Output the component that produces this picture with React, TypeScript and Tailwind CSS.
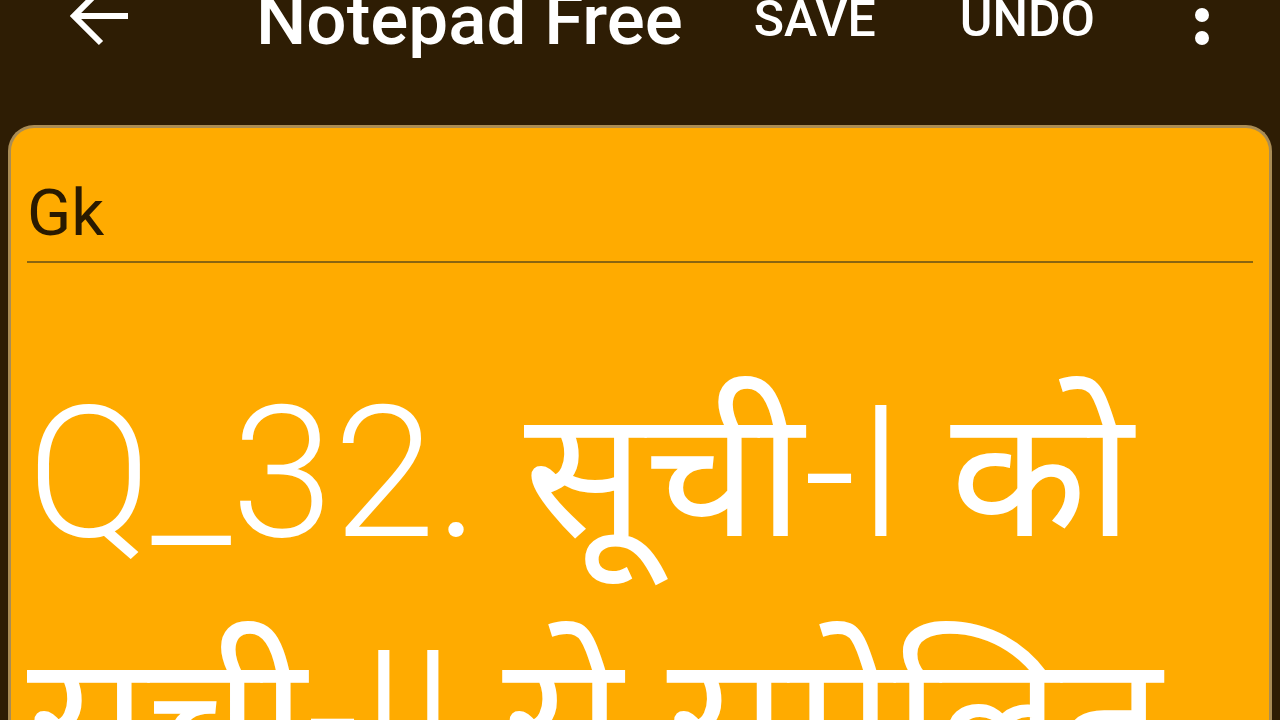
import React from 'react';

const ui = { fontFamily: 'Roboto, "Noto Sans", sans-serif' };
const note = { fontFamily: 'Roboto, "Noto Sans Devanagari", "Noto Sans", "DejaVu Sans", sans-serif' };

const BackArrow = () => (
  <svg width="60" height="60" viewBox="0 0 60 60" className="-mt-[14px] ml-[70px] shrink-0">
    <path d="M4 30 H58 M31 3 L4 30 L31 57" fill="none" stroke="#ffffff" strokeWidth="6" />
  </svg>
);

const MoreDots = () => (
  <svg width="14" height="60" viewBox="0 0 14 60" className="-mt-[15px] shrink-0">
    <circle cx="7" cy="7" r="7" fill="#ffffff" />
    <circle cx="7" cy="30" r="7" fill="#ffffff" />
    <circle cx="7" cy="53" r="7" fill="#ffffff" />
  </svg>
);

// Hindi words are a touch heavier and narrower than the Latin run in the note
const Hi = ({ children }: { children: React.ReactNode }) => (
  <span className="font-normal text-[178px]">{children}</span>
);

export default function App() {
  return (
    <div className="w-[1280px] h-[720px] overflow-hidden bg-[#2e1d04] flex flex-col">
      {/* Toolbar */}
      <div className="h-[125px] shrink-0 flex items-start text-white" style={ui}>
        <BackArrow />
        <span className="ml-[126px] -mt-[16px] text-[71px] font-medium leading-none">
          Notepad Free
        </span>
        <div className="ml-auto mr-[71px] flex items-start">
          <span className="-mt-[6px] text-[50px] font-medium leading-none">SAVE</span>
          <span className="ml-[84px] -mt-[6px] text-[50px] font-medium leading-none">UNDO</span>
          <span className="ml-[100px]">
            <MoreDots />
          </span>
        </div>
      </div>

      {/* Note card */}
      <div className="mx-[8px] flex-1 rounded-t-[26px] border-[3px] border-b-0 border-[#a98c55] bg-[#ffab00] px-[16px] pt-[53px] overflow-hidden">
        <div className="text-[65px] leading-none text-[#2a1a00]" style={ui}>
          Gk
        </div>
        <div className="mt-[15px] h-[2px] bg-[#8a6510]" />
        <p className="mt-[89px] text-[184px] font-light leading-[243px] text-white" style={note}>
          Q_32. <Hi>सूची</Hi>-I <Hi>को</Hi>
          <br />
          <Hi>सूची</Hi>-II <Hi>से सुमेलित कीजिए</Hi>
        </p>
      </div>
    </div>
  );
}
